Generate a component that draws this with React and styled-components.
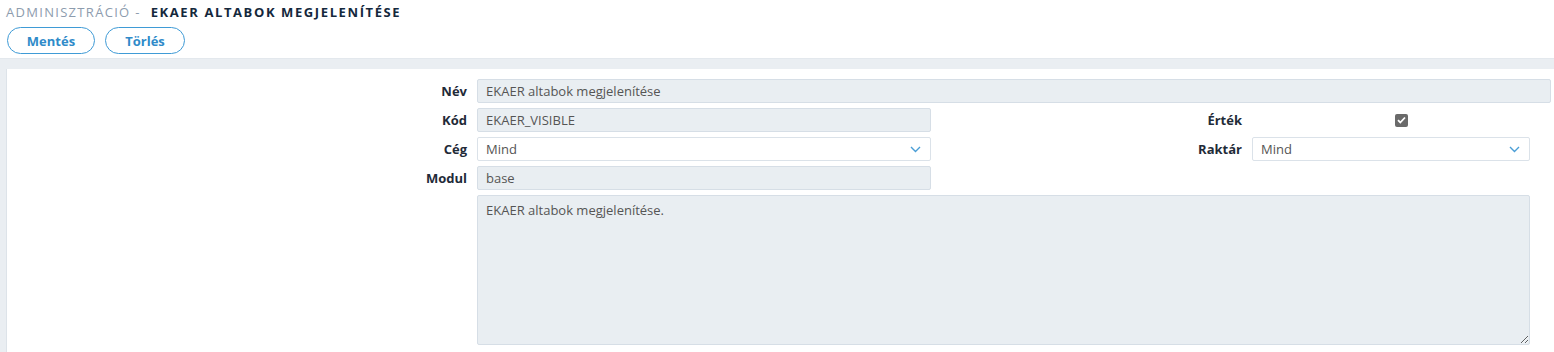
import React from 'react';
import styled, { createGlobalStyle } from 'styled-components';

const GlobalStyle = createGlobalStyle`
    html, body {
        margin: 0;
        padding: 0;
        background: #fff;
        font-family: "Open Sans", "Liberation Sans", sans-serif;
        font-size: 13px;
        color: #333;
    }
`;

const Page = styled.div`
    display: flex;
    flex-direction: column;
    min-height: 352px;
`;

const Header = styled.div`
    display: flex;
    flex-direction: column;
    padding: 5px 7px 0 7px;
    height: 53px;
    border-bottom: 1px solid #e3e8ed;
`;

const Breadcrumb = styled.div`
    display: flex;
    align-items: baseline;
    gap: 10px;
    font-size: 13px;
    text-transform: uppercase;
    line-height: 15px;
    margin-left: -1px;
`;

const Crumb = styled.span`
    color: #8d9cae;
    letter-spacing: 1.3px;
`;

const Title = styled.span`
    color: #14283c;
    font-weight: 700;
    letter-spacing: 1.6px;
`;

const Toolbar = styled.div`
    display: flex;
    gap: 10px;
    margin-top: 7px;
`;

const PillButton = styled.button`
    width: ${props => props.w}px;
    height: 27px;
    border: 1px solid #3f9bd6;
    border-radius: 14px;
    background: #fff;
    color: #2f8bc9;
    font-family: "Open Sans", "Liberation Sans", sans-serif;
    font-weight: 700;
    font-size: 13px;
    padding: 0;
    cursor: pointer;
`;

const Body = styled.div`
    flex: 1;
    background: #eaeef2;
    padding: 10px 0 0 6px;
    display: flex;
`;

const Panel = styled.div`
    flex: 1;
    background: #fff;
    border-left: 1px solid #dde3e9;
    padding: 10px 0 8px 0;
    display: grid;
    grid-template-columns: 460px 454px 301px 278px 11px;
    column-gap: 10px;
    row-gap: 5px;
    align-items: center;
    align-content: start;
`;

const Label = styled.label`
    grid-column: ${props => props.col || 1};
    text-align: right;
    font-weight: 700;
    color: #1f2b38;
    font-size: 13px;
`;

const Field = styled.div`
    grid-column: ${props => props.span};
    height: 24px;
    box-sizing: border-box;
    border: 1px solid ${props => (props.select ? '#dbe2e9' : '#d6dee6')};
    border-radius: 2px;
    background: ${props => (props.select ? '#fff' : '#e9eef2')};
    color: #555;
    display: flex;
    align-items: center;
    justify-content: space-between;
    padding: 0 9px 0 8px;
    font-size: 13px;
`;

const CheckCell = styled.div`
    grid-column: 4 / 6;
    display: flex;
    justify-content: center;
    height: 24px;
    align-items: center;
`;

const CheckBox = styled.span`
    width: 13px;
    height: 13px;
    border-radius: 2px;
    background: #6a6a6a;
    display: flex;
    align-items: center;
    justify-content: center;
`;

const TextArea = styled.textarea`
    grid-column: 2 / 5;
    height: 150px;
    box-sizing: border-box;
    border: 1px solid #d6dee6;
    border-radius: 2px;
    background: #e9eef2;
    color: #555;
    font-family: "Open Sans", "Liberation Sans", sans-serif;
    font-size: 13px;
    padding: 5px 8px;
    resize: both;
    outline: none;
`;

function Chevron() {
    return (
        <svg width="11" height="7" viewBox="0 0 11 7">
            <path d="M1 1l4.5 4.5L10 1" fill="none" stroke="#4a9ed6" strokeWidth="1.4" />
        </svg>
    );
}

function App() {
    return (
        <Page>
            <GlobalStyle />
            <Header>
                <Breadcrumb>
                    <Crumb>Adminisztráció -</Crumb>
                    <Title>EKAER altabok megjelenítése</Title>
                </Breadcrumb>
                <Toolbar>
                    <PillButton w={88}>Mentés</PillButton>
                    <PillButton w={80}>Törlés</PillButton>
                </Toolbar>
            </Header>
            <Body>
                <Panel>
                    <Label>Név</Label>
                    <Field span="2 / 6">EKAER altabok megjelenítése</Field>

                    <Label>Kód</Label>
                    <Field span="2">EKAER_VISIBLE</Field>
                    <Label col={3}>Érték</Label>
                    <CheckCell>
                        <CheckBox>
                            <svg width="9" height="8" viewBox="0 0 9 8">
                                <path d="M1 4.2l2.3 2.3L8 1.5" fill="none" stroke="#fff" strokeWidth="1.8" />
                            </svg>
                        </CheckBox>
                    </CheckCell>

                    <Label>Cég</Label>
                    <Field span="2" select>Mind<Chevron /></Field>
                    <Label col={3}>Raktár</Label>
                    <Field span="4" select>Mind<Chevron /></Field>

                    <Label>Modul</Label>
                    <Field span="2">base</Field>

                    <TextArea defaultValue="EKAER altabok megjelenítése." />
                </Panel>
            </Body>
        </Page>
    );
}

export default App;
